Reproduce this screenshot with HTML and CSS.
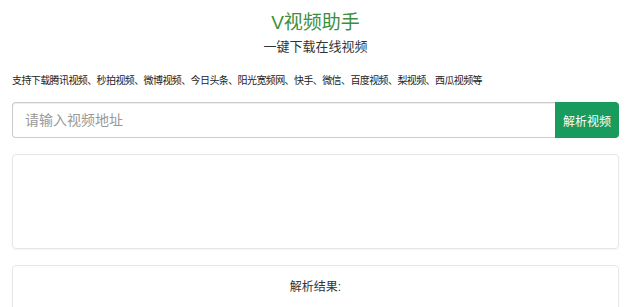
FILE: index.html
```html
<!DOCTYPE html>
<html lang="zh-CN">
<head>
    <meta charset="UTF-8">
    <meta name="viewport" content="width=device-width, initial-scale=1.0">
    <title>V视频助手</title>
    <link rel="stylesheet" href="styles.css">
</head>
<body>
    <div class="container">
        <header class="top">
            <h1>V视频助手</h1>
            <h2>一键下载在线视频</h2>
        </header>
        <p class="tips">支持下载腾讯视频、秒拍视频、微博视频、今日头条、阳光宽频网、快手、微信、百度视频、梨视频、西瓜视频等</p>
        <form class="search">
            <input type="text" placeholder="请输入视频地址">
            <button type="button">解析视频</button>
        </form>
        <div class="panel player"></div>
        <div class="panel result">
            <p>解析结果:</p>
        </div>
    </div>
</body>
</html>
```
FILE: styles.css
```css
body {
    margin: 0;
    font-family: "Liberation Sans", "Noto Sans CJK SC", sans-serif;
    color: #333;
    background: #fff;
}
.container {
    width: 607px;
    margin-left: 12px;
}
.top {
    text-align: center;
    padding-top: 10px;
}
.top h1 {
    margin: 0;
    font-size: 19px;
    font-weight: normal;
    color: #3d8f3d;
    line-height: 26px;
}
.top h2 {
    margin: 0;
    font-size: 13px;
    font-weight: normal;
    color: #333;
    line-height: 22px;
}
.tips {
    margin: 16px 0 0;
    font-size: 10px;
    line-height: 14px;
    letter-spacing: -0.6px;
    color: #222;
}
.search {
    display: flex;
    margin: 14px 0 0;
    height: 36px;
}
.search input {
    flex: 1;
    height: 36px;
    box-sizing: border-box;
    border: 1px solid #ccc;
    border-right: none;
    border-radius: 4px 0 0 4px;
    padding: 0 12px;
    font-size: 14px;
    font-family: inherit;
    box-shadow: inset 0 1px 1px rgba(0, 0, 0, 0.075);
}
.search input::placeholder {
    color: #999;
}
.search button {
    width: 64px;
    border: none;
    border-radius: 0 4px 4px 0;
    background: #189b5c;
    color: #fff;
    font-size: 12px;
    font-family: inherit;
}
.panel {
    border: 1px solid #e7e7e7;
    border-radius: 4px;
    box-shadow: 0 1px 2px rgba(0, 0, 0, 0.05);
}
.player {
    margin-top: 16px;
    height: 93px;
}
.result {
    margin-top: 16px;
    height: 80px;
    text-align: center;
}
.result p {
    margin: 11px 0 0;
    font-size: 12px;
    color: #333;
}
```
